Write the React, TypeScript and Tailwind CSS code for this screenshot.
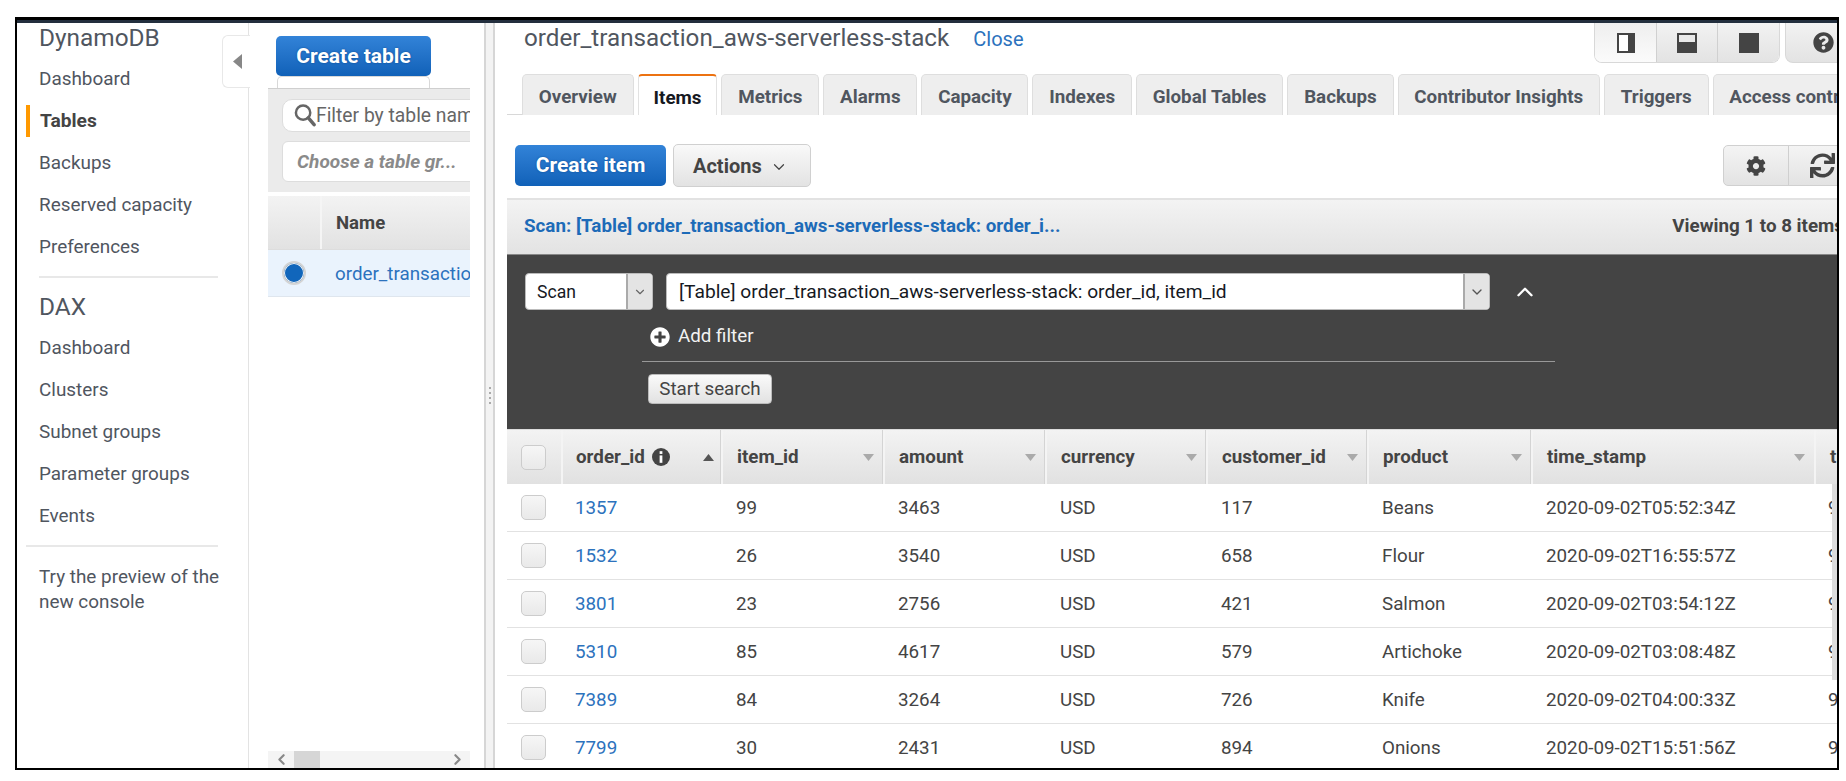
import { FaCog, FaPlusCircle, FaQuestionCircle, FaSync } from "react-icons/fa"
import { ChevronDown, ChevronLeft, ChevronRight, ChevronUp } from "lucide-react"

const rows = [
  ["1357", "99", "3463", "USD", "117", "Beans", "2020-09-02T05:52:34Z"],
  ["1532", "26", "3540", "USD", "658", "Flour", "2020-09-02T16:55:57Z"],
  ["3801", "23", "2756", "USD", "421", "Salmon", "2020-09-02T03:54:12Z"],
  ["5310", "85", "4617", "USD", "579", "Artichoke", "2020-09-02T03:08:48Z"],
  ["7389", "84", "3264", "USD", "726", "Knife", "2020-09-02T04:00:33Z"],
  ["7799", "30", "2431", "USD", "894", "Onions", "2020-09-02T15:51:56Z"],
]

const tabs = ["Overview", "Items", "Metrics", "Alarms", "Capacity", "Indexes", "Global Tables", "Backups", "Contributor Insights", "Triggers", "Access control"]
const columns = ["item_id", "amount", "currency", "customer_id", "product", "time_stamp"]
const gridCols = "grid-cols-[54px_160px_162px_162px_161px_161px_164px_283px_100px]"

function NavItem({ label }: { label: string }) {
  return <div className="h-[42.1px] flex items-center text-[18.9px] text-[#50565f]">{label}</div>
}

function SortArrow({ up }: { up?: boolean }) {
  return (
    <svg width="11" height="7" viewBox="0 0 11 7" className="flex-none">
      <path d={up ? "M0 7L5.5 0L11 7Z" : "M0 0H11L5.5 7Z"} fill={up ? "#555" : "#aaa"} />
    </svg>
  )
}

function Checkbox() {
  return <div className="w-[25px] h-[25px] rounded-[5px] border border-[#ccc] bg-linear-to-b from-[#f6f6f6] to-[#e9e9e9]" />
}

function HeaderCell({ label }: { label: string }) {
  return (
    <div className="flex items-center justify-between pl-[14px] pr-[9px] border-l-2 border-[#f4f4f4] shadow-[-1px_0_0_#d4d4d4]">
      <span>{label}</span>
      <SortArrow />
    </div>
  )
}

function App() {
  return (
    <div className="w-[1846px] h-[781px] bg-white pt-[17px] pl-[15px] overflow-hidden font-[Roboto,sans-serif] text-[#444]">
      <div className="w-[1824px] h-[753px] border-2 border-t-[3px] border-black flex flex-col overflow-hidden">
        <div className="h-[3px] flex-none bg-[#232f3e]" />
        <div className="flex flex-1 min-h-0">
          {/* left nav */}
          <div className="relative w-[232px] flex-none border-r border-[#e3e3e3] pl-[22px] pr-[30px]">
            <div className="h-[35px] flex items-center text-[24.4px] leading-none text-[#50565f] pb-[4px]">DynamoDB</div>
            <NavItem label="Dashboard" />
            <div className="-ml-[13px] pl-[10px] my-[5px] h-[32.1px] flex items-center border-l-4 border-[#ff9900] text-[19.2px] font-bold text-[#444]">Tables</div>
            <NavItem label="Backups" />
            <NavItem label="Reserved capacity" />
            <NavItem label="Preferences" />
            <div className="mt-[8px] h-[1.5px] bg-[#e8e8e8]" />
            <div className="h-[49px] pt-[9px] flex items-center text-[24.4px] leading-none text-[#50565f]">DAX</div>
            <NavItem label="Dashboard" />
            <NavItem label="Clusters" />
            <NavItem label="Subnet groups" />
            <NavItem label="Parameter groups" />
            <NavItem label="Events" />
            <div className="mt-[8px] -ml-[13px] h-[1.5px] bg-[#e8e8e8]" />
            <div className="mt-[17px] text-[18.9px] leading-[25px] text-[#50565f] whitespace-nowrap">Try the preview of the<br />new console</div>
            <div className="absolute left-[205px] top-[12px] w-[28px] h-[53px] bg-white border border-r-0 border-[#e8e8e8] rounded-l-[6px] flex items-center pl-[10px]">
              <svg width="9" height="15" viewBox="0 0 9 15"><path d="M9 0V15L0 7.5Z" fill="#878787" /></svg>
            </div>
          </div>

          {/* table list */}
          <div className="w-[235px] flex-none pl-[19px] pr-[14px] flex flex-col">
            <div className="pl-[8px] pt-[13px] overflow-hidden">
              <div className="w-[155px] h-[40px] pt-[1px] rounded-[5px] bg-linear-to-b from-[#3283d8] to-[#1061b8] text-white font-bold text-[21px] flex items-center justify-center [text-shadow:0_0_2px_#0b4a90]">Create table</div>
              <div className="w-[153px] h-[12px] ml-[1px] bg-white border border-b-0 border-[#d8d8d8] rounded-t-[5px]" />
            </div>
            <div className="h-[104px] flex-none bg-[#ebebeb] border-t border-[#cfcfcf] pl-[14px] pt-[10px] overflow-hidden">
              <div className="h-[33px] w-[200px] bg-white rounded-l-[10px] border border-[#ddd] flex items-center pl-[11px] text-[19.3px] text-[#666] whitespace-nowrap">
                <svg width="22" height="25" viewBox="0 0 23 25" className="flex-none">
                  <circle cx="9.5" cy="9.5" r="7.5" fill="none" stroke="#666" strokeWidth="2.6" />
                  <path d="M15 15L21 22" stroke="#666" strokeWidth="3.6" strokeLinecap="round" />
                </svg>
                <span className="pt-[1px]">Filter by table name</span>
              </div>
              <div className="mt-[9px] h-[41px] w-[200px] bg-white rounded-l-[6px] border border-[#ddd] flex items-center pl-[14px] pt-[1px] text-[19px] italic font-bold text-[#8a8a8a] whitespace-nowrap">Choose a table gr...</div>
            </div>
            <div className="mt-[4px] h-[54px] flex-none bg-linear-to-b from-[#f3f3f3] to-[#e2e2e2] flex border-b border-[#ddd]">
              <div className="w-[54px] border-r-2 border-[#f5f5f5]" />
              <div className="pl-[14px] pt-[2px] flex items-center font-bold text-[18.6px]">Name</div>
            </div>
            <div className="h-[47px] flex-none bg-[#eaf3fd] border-b border-[#dfe6ee] flex items-center overflow-hidden">
              <div className="w-[24px] h-[24px] ml-[14px] flex-none rounded-full border-2 border-[#d4d4d4] bg-[#1166bb] shadow-[inset_0_0_0_1px_#f4f4f4]" />
              <span className="ml-[29px] pt-[2px] text-[18.8px] text-[#2c72bd] whitespace-nowrap">order_transaction_aws-serverless-stack</span>
            </div>
            <div className="mt-auto h-[17px] flex-none bg-[#f4f4f4] flex items-center overflow-hidden">
              <div className="w-[26px] flex-none flex justify-center"><ChevronLeft size={17} strokeWidth={3} color="#888" /></div>
              <div className="w-[26px] h-full flex-none bg-[#d6d6d6]" />
              <div className="ml-auto w-[26px] flex justify-center"><ChevronRight size={17} strokeWidth={3} color="#888" /></div>
            </div>
          </div>

          {/* splitter */}
          <div className="w-[11px] flex-none bg-[#f3f3f3] border-x-2 border-[#d6d6d6] flex flex-col items-center justify-center gap-[3px]">
            <div className="w-[2px] h-[2px] bg-[#aaa]" />
            <div className="w-[2px] h-[2px] bg-[#aaa]" />
            <div className="w-[2px] h-[2px] bg-[#aaa]" />
            <div className="w-[2px] h-[2px] bg-[#aaa]" />
          </div>

          {/* main */}
          <div className="flex-1 min-w-0 pl-[12px] overflow-hidden flex flex-col">
            <div className="h-[51px] flex-none flex items-start pl-[17px]">
              <div className="flex items-baseline mt-[-3px]">
                <span className="text-[24.2px] text-[#50565f]">order_transaction_aws-serverless-stack</span>
                <span className="ml-[24px] text-[20px] text-[#2c72bd]">Close</span>
              </div>
              <div className="ml-auto flex gap-[5px] -mr-[8px]">
                <div className="flex w-[186px] h-[40px] rounded-b-[8px] border border-t-0 border-[#d8d8d8] overflow-hidden">
                  <div className="w-[62px] bg-linear-to-b from-[#eeeeee] to-[#fbfbfb] flex items-center justify-center border-r border-[#d0d0d0]">
                    <div className="w-[18px] h-[20px] bg-[#444] pl-[2px] py-[2px] pr-[7px]"><div className="w-full h-full bg-white" /></div>
                  </div>
                  <div className="w-[61px] bg-linear-to-b from-[#f2f2f2] to-[#e3e3e3] flex items-center justify-center border-r border-[#d0d0d0]">
                    <div className="w-[20px] h-[20px] bg-[#444] px-[2px] pt-[2px] pb-[11px]"><div className="w-full h-full bg-[#e8e8e8]" /></div>
                  </div>
                  <div className="flex-1 bg-linear-to-b from-[#f2f2f2] to-[#e3e3e3] flex items-center justify-center">
                    <div className="w-[20px] h-[20px] bg-[#444]" />
                  </div>
                </div>
                <div className="w-[60px] h-[40px] rounded-b-[8px] border border-t-0 border-[#d8d8d8] bg-linear-to-b from-[#f2f2f2] to-[#e3e3e3] flex items-center pl-[27px]">
                  <FaQuestionCircle size={21} color="#444" />
                </div>
              </div>
            </div>

            <div className="h-[41px] flex-none flex overflow-hidden">
              <div className="w-[15px] flex-none border-b border-[#d8d8d8]" />
              <div className="flex gap-[4px] flex-none">
                {tabs.map((t) =>
                  t === "Items" ? (
                    <div key={t} className="px-[15px] flex items-center pt-[5px] bg-white border border-b-0 border-[#e2e2e2] border-t-2 border-t-[#ec7211] rounded-t-[4px] font-bold text-[18.8px] text-[#16191f]">{t}</div>
                  ) : (
                    <div key={t} className="px-[15.8px] flex items-center pt-[4px] bg-[#eeeeee] border border-b-0 border-[#dedede] rounded-t-[5px] font-bold text-[18.8px] text-[#50565f] whitespace-nowrap">{t}</div>
                  )
                )}
              </div>
            </div>

            <div className="h-[83px] flex-none flex items-start pl-[8px] pt-[29px]">
              <div className="w-[151px] h-[41px] mt-[1px] pt-[1px] rounded-[5px] bg-linear-to-b from-[#3283d8] to-[#1061b8] text-white font-bold text-[21px] flex items-center justify-center [text-shadow:0_0_2px_#0b4a90]">Create item</div>
              <div className="ml-[7px] w-[138px] h-[43px] rounded-[5px] border border-[#d0d0d0] bg-linear-to-b from-[#f9f9f9] to-[#e3e3e3] font-bold text-[20px] flex items-center pl-[19px] gap-[8px]">
                Actions <ChevronDown size={18} strokeWidth={1.6} className="mt-[3px]" />
              </div>
              <div className="ml-auto -mr-[8px] flex w-[122px] h-[41px] mt-[1px] rounded-[5px] border border-[#d0d0d0] bg-linear-to-b from-[#f4f4f4] to-[#e3e3e3] flex-none">
                <div className="w-[65px] flex-none border-r border-[#cfcfcf] flex items-center justify-center"><FaCog size={20} color="#444" /></div>
                <div className="pl-[21px] flex items-center"><FaSync size={25} color="#444" /></div>
              </div>
            </div>

            <div className="h-[56px] flex-none bg-linear-to-b from-[#f3f3f3] to-[#e3e3e3] border-t-2 border-[#e2e2e2] flex items-center justify-between pl-[17px] pb-[2px] whitespace-nowrap overflow-hidden font-bold">
              <span className="text-[18.8px] text-[#1d6bb8]">Scan: [Table] order_transaction_aws-serverless-stack: order_i...</span>
              <span className="text-[18.8px] -mr-[7px] flex-none">Viewing 1 to 8 items</span>
            </div>

            <div className="h-[175px] flex-none bg-[#444] border-t border-[#888] text-[18.8px]">
              <div className="flex items-center pl-[18px] pt-[18px]">
                <div className="w-[128px] h-[37px] flex rounded-[4px] bg-white border border-[#bbb] overflow-hidden flex-none">
                  <span className="flex-1 pl-[11px] pt-[2px] flex items-center text-[17.6px] text-[#16191f]">Scan</span>
                  <div className="w-[26px] bg-[#e4e4e4] border-l-2 border-[#aaa] flex items-center justify-center"><ChevronDown size={14} color="#666" /></div>
                </div>
                <div className="ml-[13px] w-[824px] h-[37px] flex rounded-[4px] bg-white border border-[#bbb] overflow-hidden flex-none">
                  <span className="flex-1 pl-[12px] pt-[2px] flex items-center text-[19.2px] text-[#16191f] whitespace-nowrap">[Table] order_transaction_aws-serverless-stack: order_id, item_id</span>
                  <div className="w-[26px] bg-[#e4e4e4] border-l-2 border-[#aaa] flex items-center justify-center"><ChevronDown size={16} color="#555" /></div>
                </div>
                <ChevronUp size={26} color="#fff" strokeWidth={2.2} className="ml-[22px]" />
              </div>
              <div className="ml-[135px] w-[913px] h-[52px] border-b border-[#999] flex items-center pl-[8px] pt-[2px] text-[#f2f2f2]">
                <FaPlusCircle size={20} color="#fff" />
                <span className="ml-[8px]">Add filter</span>
              </div>
              <div className="ml-[141px] mt-[12px] w-[124px] h-[30px] rounded-[4px] border border-[#bbb] bg-linear-to-b from-[#fafafa] to-[#e2e2e2] flex items-center justify-center text-[#444]">Start search</div>
            </div>

            <div className={`h-[55px] flex-none grid ${gridCols} bg-linear-to-b from-[#f3f3f3] to-[#e1e1e1] border-t border-[#ddd] font-bold text-[18.8px] whitespace-nowrap`}>
              <div className="flex items-center pl-[14px]"><Checkbox /></div>
              <div className="flex items-center pl-[13px] pr-[7px] border-l-2 border-[#f4f4f4]">
                <span>order_id</span>
                <svg width="18" height="18" viewBox="0 0 17 17" className="ml-[7px]">
                  <circle cx="8.5" cy="8.5" r="8.5" fill="#444" />
                  <rect x="7.2" y="3" width="2.6" height="2.6" fill="#fff" />
                  <rect x="7.2" y="7" width="2.6" height="7" fill="#fff" />
                </svg>
                <span className="ml-auto"><SortArrow up /></span>
              </div>
              {columns.map((c) => <HeaderCell key={c} label={c} />)}
              <div className="flex items-center pl-[14px] border-l-2 border-[#f4f4f4]">time</div>
            </div>

            <div className="relative flex-1 min-h-0 text-[18.8px]">
              {rows.map((r) => (
                <div key={r[0]} className={`h-[48px] grid ${gridCols} border-b border-[#e2e2e2] items-center whitespace-nowrap`}>
                  <div className="pl-[14px]"><Checkbox /></div>
                  <div className="pl-[14px] pt-[1px] text-[#2c72bd]">{r[0]}</div>
                  {r.slice(1).map((v, i) => <div key={i} className="pl-[15px] pt-[1px]">{v}</div>)}
                  <div className="pl-[14px] pt-[1px]">9</div>
                </div>
              ))}
              <div className="absolute right-0 top-0 w-[5px] h-[196px] bg-[#dcdcdc]" />
            </div>
          </div>
        </div>
      </div>
    </div>
  )
}

export default App
